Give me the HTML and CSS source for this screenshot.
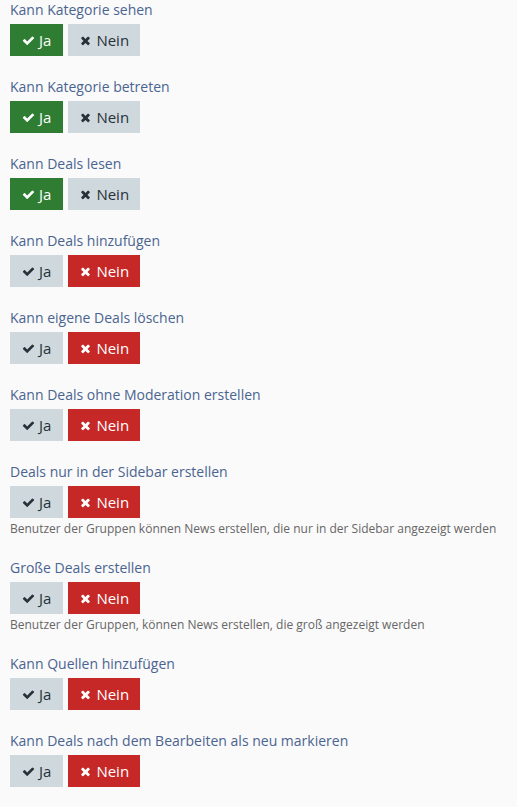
FILE: index.html
```html
<!DOCTYPE html>
<html lang="de">
<head>
<meta charset="utf-8">
<link rel="stylesheet" href="styles.css">
<title>Rechte</title>
</head>
<body>
<svg style="display:none" xmlns="http://www.w3.org/2000/svg">
  <symbol id="i-check" viewBox="0 0 1792 1792"><path d="M1671 566q0 40-28 68l-724 724-136 136q-28 28-68 28t-68-28l-136-136-362-362q-28-28-28-68t28-68l136-136q28-28 68-28t68 28l294 295 656-657q28-28 68-28t68 28l136 136q28 28 28 68z"/></symbol>
  <symbol id="i-times" viewBox="0 0 1408 1792"><path d="M1298 1322q0 40-28 68l-136 136q-28 28-68 28t-68-28l-294-294-294 294q-28 28-68 28t-68-28l-136-136q-28-28-28-68t28-68l294-294-294-294q-28-28-28-68t28-68l136-136q28-28 68-28t68 28l294 294 294-294q28-28 68-28t68 28l136 136q28 28 28 68t-28 68l-294 294 294 294q28 28 28 68z"/></symbol>
</svg>
<div class="list">
  <div class="group">
    <div class="label">Kann Kategorie sehen</div>
    <div class="btns">
      <span class="btn yes on"><svg class="ic"><use href="#i-check"/></svg>Ja</span>
      <span class="btn no"><svg class="ic ic-x"><use href="#i-times"/></svg>Nein</span>
    </div>
  </div>
  <div class="group">
    <div class="label">Kann Kategorie betreten</div>
    <div class="btns">
      <span class="btn yes on"><svg class="ic"><use href="#i-check"/></svg>Ja</span>
      <span class="btn no"><svg class="ic ic-x"><use href="#i-times"/></svg>Nein</span>
    </div>
  </div>
  <div class="group">
    <div class="label">Kann Deals lesen</div>
    <div class="btns">
      <span class="btn yes on"><svg class="ic"><use href="#i-check"/></svg>Ja</span>
      <span class="btn no"><svg class="ic ic-x"><use href="#i-times"/></svg>Nein</span>
    </div>
  </div>
  <div class="group">
    <div class="label">Kann Deals hinzufügen</div>
    <div class="btns">
      <span class="btn yes"><svg class="ic"><use href="#i-check"/></svg>Ja</span>
      <span class="btn no on"><svg class="ic ic-x"><use href="#i-times"/></svg>Nein</span>
    </div>
  </div>
  <div class="group">
    <div class="label">Kann eigene Deals löschen</div>
    <div class="btns">
      <span class="btn yes"><svg class="ic"><use href="#i-check"/></svg>Ja</span>
      <span class="btn no on"><svg class="ic ic-x"><use href="#i-times"/></svg>Nein</span>
    </div>
  </div>
  <div class="group">
    <div class="label">Kann Deals ohne Moderation erstellen</div>
    <div class="btns">
      <span class="btn yes"><svg class="ic"><use href="#i-check"/></svg>Ja</span>
      <span class="btn no on"><svg class="ic ic-x"><use href="#i-times"/></svg>Nein</span>
    </div>
  </div>
  <div class="group">
    <div class="label">Deals nur in der Sidebar erstellen</div>
    <div class="btns">
      <span class="btn yes"><svg class="ic"><use href="#i-check"/></svg>Ja</span>
      <span class="btn no on"><svg class="ic ic-x"><use href="#i-times"/></svg>Nein</span>
    </div>
    <div class="help">Benutzer der Gruppen können News erstellen, die nur in der Sidebar angezeigt werden</div>
  </div>
  <div class="group">
    <div class="label">Große Deals erstellen</div>
    <div class="btns">
      <span class="btn yes"><svg class="ic"><use href="#i-check"/></svg>Ja</span>
      <span class="btn no on"><svg class="ic ic-x"><use href="#i-times"/></svg>Nein</span>
    </div>
    <div class="help">Benutzer der Gruppen, können News erstellen, die groß angezeigt werden</div>
  </div>
  <div class="group">
    <div class="label">Kann Quellen hinzufügen</div>
    <div class="btns">
      <span class="btn yes"><svg class="ic"><use href="#i-check"/></svg>Ja</span>
      <span class="btn no on"><svg class="ic ic-x"><use href="#i-times"/></svg>Nein</span>
    </div>
  </div>
  <div class="group">
    <div class="label">Kann Deals nach dem Bearbeiten als neu markieren</div>
    <div class="btns">
      <span class="btn yes"><svg class="ic"><use href="#i-check"/></svg>Ja</span>
      <span class="btn no on"><svg class="ic ic-x"><use href="#i-times"/></svg>Nein</span>
    </div>
  </div>
</div>
</body>
</html>
```
FILE: styles.css
```css
html, body {
  margin: 0;
  padding: 0;
  background: #fafafa;
}
body {
  font-family: "Open Sans", "Noto Sans", sans-serif;
  font-size: 14px;
  color: #333;
}
.list {
  padding: 0 10px;
  display: flex;
  flex-direction: column;
  gap: 21px;
}
.label {
  color: #4a6490;
  font-size: 14px;
  line-height: 19px;
}
.btns {
  display: flex;
  gap: 5px;
  margin-top: 5px;
}
.btn {
  display: inline-flex;
  align-items: center;
  height: 32px;
  padding: 0 12px;
  box-sizing: border-box;
  background: #cfd8dc;
  color: #263238;
  font-size: 15px;
}
.btn.no {
  padding: 0 11px 0 12px;
}
.btn .ic {
  width: 13px;
  height: 13px;
  fill: currentColor;
  margin-right: 4px;
}
.btn .ic-x {
  width: 11px;
  margin-right: 5px;
}
.btn.yes.on {
  background: #2e7d32;
  color: #fff;
}
.btn.no.on {
  background: #c62828;
  color: #fff;
}
.help {
  margin-top: 2px;
  font-size: 12px;
  line-height: 17px;
  color: #666;
}
```
